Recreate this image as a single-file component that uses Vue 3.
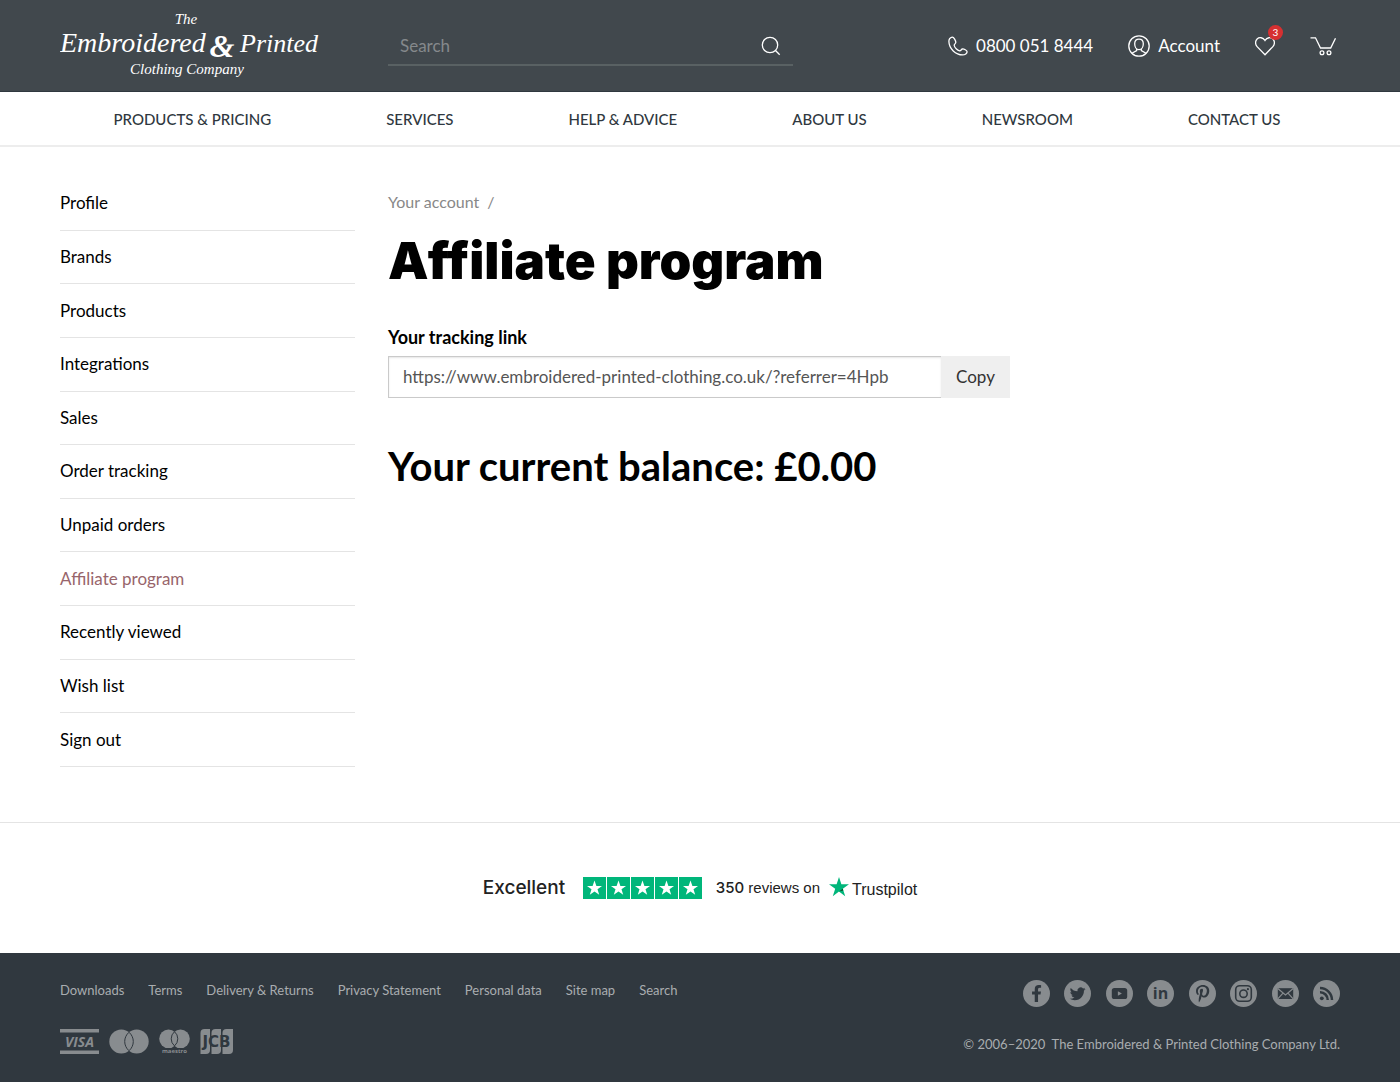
<template>
  <div class="page">
    <header class="header">
      <a
        href="#"
        class="logo"
        aria-label="The Embroidered &amp; Printed Clothing Company"
      >
        <svg
          width="260"
          height="80"
          viewBox="0 0 260 80"
        >
          <text x="126" y="18" font-size="15" text-anchor="middle">The</text>
          <text x="0" y="46" font-size="28">Embroidered</text>
          <text x="162" y="51" font-size="32" text-anchor="middle" class="logo__amp">&amp;</text>
          <text x="258" y="46" font-size="26" text-anchor="end">Printed</text>
          <text x="127" y="68" font-size="15" text-anchor="middle">Clothing Company</text>
        </svg>
      </a>

      <form
        class="search"
        @submit.prevent
      >
        <input
          v-model="query"
          type="search"
          placeholder="Search"
          aria-label="Search"
        >
        <button
          type="submit"
          aria-label="Search"
        >
          <svg width="20" height="20" viewBox="0 0 20 20" class="line">
            <circle cx="9" cy="9" r="7.7" />
            <path d="M14.5 14.5l4.2 4.2" />
          </svg>
        </button>
      </form>

      <div class="tools">
        <a href="#" class="tools__phone">
          <svg width="20" height="20" viewBox="0 0 20 20" class="line">
            <path d="M4.2 1.1C2.2 1.6.8 3.2.9 5.5c.2 7.3 6.8 13.4 13.7 13.4 2.5 0 4.500-1.600 4.500-3.200 0-1.300-3.400-2.900-4.600-2.700-1.300.2-1.600 2-2.900 1.800-2.300-.5-5-3.200-5.400-5.300-.2-1.400 1.500-1.700 1.600-3C7.900 5 5.800.8 4.200 1.100z" />
          </svg>
          0800 051 8444
        </a>
        <a href="#" class="tools__account">
          <svg width="22" height="22" viewBox="0 0 22 22" class="line">
            <circle cx="11" cy="11" r="10.2" />
            <path d="M11 4.2c-2.7 0-4.3 1.9-4.3 4.6 0 3.2 1.7 5.9 4.3 5.9s4.3-2.7 4.3-5.9c0-2.7-1.6-4.6-4.3-4.6z" />
            <path d="M8.7 13.9v1.7l-4.8 2.6M13.3 13.9v1.7l4.8 2.6" />
          </svg>
          Account
        </a>
        <a href="#" class="tools__wish" aria-label="Wish list">
          <svg width="20" height="20" viewBox="1 0 20 20" class="line">
            <path d="M11 18.7L3.1 10.6C1 8.4 1.1 4.9 3.1 3 5.3.9 9 1.3 11 4.5c2-3.2 5.7-3.6 7.9-1.5 2 1.9 2.1 5.4 0 7.6z" />
          </svg>
          <span class="badge">3</span>
        </a>
        <a href="#" class="tools__cart" aria-label="Basket">
          <svg width="26" height="20" viewBox="0 0 26 20" class="line">
            <path d="M.5 1.8h5l5 10.2h10.2l4.8-9.8" />
            <circle cx="12" cy="16.8" r="1.9" />
            <circle cx="19" cy="16.8" r="1.9" />
          </svg>
        </a>
      </div>
    </header>

    <nav class="nav">
      <a
        v-for="item in navItems"
        :key="item"
        href="#"
      >{{ item }}</a>
    </nav>

    <div class="main">
      <ul class="sidebar">
        <li
          v-for="item in accountItems"
          :key="item"
        >
          <a
            href="#"
            :class="{ active: item === 'Affiliate program' }"
          >{{ item }}</a>
        </li>
      </ul>

      <main class="content">
        <div class="breadcrumbs">
          <a href="#">Your account</a>
          <span>/</span>
        </div>
        <h1>Affiliate program</h1>
        <label for="tracking">Your tracking link</label>
        <div class="tracking">
          <input
            id="tracking"
            type="text"
            readonly
            :value="link"
          >
          <button
            type="button"
            @click="copyLink"
          >
            Copy
          </button>
        </div>
        <h2>Your current balance: £0.00</h2>
      </main>
    </div>

    <section class="trust">
      <a href="#">
        <strong>Excellent</strong>
        <span class="trust__stars">
          <svg
            v-for="n in 5"
            :key="n"
            width="23"
            height="22"
            viewBox="0 0 23 22"
          >
            <path fill="#00b67a" d="M0 0h23v22H0z" />
            <path fill="#fff" d="M11.5 3.5l1.9 5.4H19l-4.5 3.4 1.7 5.4-4.7-3.3-4.7 3.3 1.7-5.4L4 8.9h5.6z" />
          </svg>
        </span>
        <span class="trust__reviews"><b>350</b> reviews on</span>
        <span class="trust__brand">
          <svg width="20" height="20" viewBox="0 0 20 20">
            <path fill="#00b67a" d="M10 0l2.4 7.3H20l-6.2 4.5 2.4 7.4-6.2-4.6-6.2 4.6 2.4-7.4L0 7.3h7.6z" />
            <path fill="#005128" d="M14.3 13.4l-.5-1.6-3.8 2.8z" />
          </svg>
          Trustpilot
        </span>
      </a>
    </section>

    <footer class="footer">
      <div class="footer__row">
        <nav class="footer__links">
          <a
            v-for="item in footerItems"
            :key="item"
            href="#"
          >{{ item }}</a>
        </nav>
        <div class="social">
          <a href="#" aria-label="Facebook">
            <svg viewBox="0 0 27 27">
              <circle cx="13.5" cy="13.5" r="13.5" />
              <path class="ink" transform="translate(8.3 5) scale(.033)" d="M279.14 288l14.22-92.66h-88.91v-60.13c0-25.35 12.42-50.06 52.24-50.06h40.42V6.26S260.43 0 225.36 0c-73.22 0-121.08 44.38-121.08 124.72v70.62H22.89V288h81.39v224h100.17V288z" />
            </svg>
          </a>
          <a href="#" aria-label="Twitter">
            <svg viewBox="0 0 27 27">
              <circle cx="13.5" cy="13.5" r="13.5" />
              <path class="ink" transform="translate(5.7 5.9) scale(.66)" d="M23.953 4.57a10 10 0 01-2.825.775 4.958 4.958 0 002.163-2.723c-.951.555-2.005.959-3.127 1.184a4.92 4.92 0 00-8.384 4.482C7.69 8.095 4.067 6.13 1.64 3.162a4.822 4.822 0 00-.666 2.475c0 1.71.87 3.213 2.188 4.096a4.904 4.904 0 01-2.228-.616v.06a4.923 4.923 0 003.946 4.827 4.996 4.996 0 01-2.212.085 4.936 4.936 0 004.604 3.417 9.867 9.867 0 01-6.102 2.105c-.39 0-.779-.023-1.17-.067a13.995 13.995 0 007.557 2.209c9.053 0 13.998-7.496 13.998-13.985 0-.21 0-.42-.015-.63A9.935 9.935 0 0024 4.59z" />
            </svg>
          </a>
          <a href="#" aria-label="YouTube">
            <svg viewBox="0 0 27 27">
              <circle cx="13.5" cy="13.5" r="13.5" />
              <rect class="ink" x="5.8" y="8" width="15.4" height="11" rx="2.6" />
              <path d="M11.9 11.2v4.6l4-2.3z" />
            </svg>
          </a>
          <a href="#" aria-label="LinkedIn">
            <svg viewBox="0 0 27 27">
              <circle cx="13.5" cy="13.5" r="13.5" />
              <text class="ink" x="13.5" y="19" font-size="16" text-anchor="middle">in</text>
            </svg>
          </a>
          <a href="#" aria-label="Pinterest">
            <svg viewBox="0 0 27 27">
              <circle cx="13.5" cy="13.5" r="13.5" />
              <path class="ink" transform="translate(7 4.8) scale(.0345)" d="M204 6.5C101.4 6.5 0 74.9 0 185.6 0 256 39.6 296 63.6 296c9.9 0 15.6-27.6 15.6-35.4 0-9.3-23.7-29.1-23.7-67.8 0-80.4 61.2-137.4 140.4-137.4 68.1 0 118.5 38.7 118.5 109.8 0 53.1-21.3 152.7-90.3 152.7-24.9 0-46.2-18-46.2-43.8 0-37.8 26.4-74.4 26.4-113.4 0-66.2-93.9-54.2-93.9 25.8 0 16.8 2.1 35.4 9.6 50.7-13.8 59.4-42 147.9-42 209.1 0 18.9 2.7 37.5 4.5 56.4 3.4 3.8 1.7 3.4 6.9 1.5 50.4-69 48.6-82.5 71.4-172.8 12.3 23.4 44.1 36 69.3 36 106.2 0 153.9-103.5 153.9-196.8C384 71.3 298.2 6.5 204 6.5z" />
            </svg>
          </a>
          <a href="#" aria-label="Instagram">
            <svg viewBox="0 0 27 27">
              <circle cx="13.5" cy="13.5" r="13.5" />
              <g class="outline">
                <rect x="5.7" y="5.7" width="15.6" height="15.6" rx="4" />
                <circle cx="13.5" cy="13.7" r="3.7" />
              </g>
              <circle class="ink" cx="17.9" cy="9.2" r="1.1" />
            </svg>
          </a>
          <a href="#" aria-label="Email">
            <svg viewBox="0 0 27 27">
              <circle cx="13.5" cy="13.5" r="13.5" />
              <rect class="ink" x="5.8" y="8.2" width="15.4" height="10.8" />
              <path class="fold" d="M5.8 8.5l7.7 6.4 7.7-6.4M5.8 18.8l5.2-5.7M21.2 18.8L16 13.1" />
            </svg>
          </a>
          <a href="#" aria-label="RSS">
            <svg viewBox="0 0 27 27">
              <circle cx="13.5" cy="13.5" r="13.5" />
              <circle class="ink" cx="8.8" cy="18.3" r="1.9" />
              <path class="wave" d="M7 12.3a7.5 7.5 0 017.7 7.7M7 8a12 12 0 0112 12" />
            </svg>
          </a>
        </div>
      </div>

      <div class="footer__row">
        <div class="cards">
          <svg width="39" height="25" viewBox="0 0 39 25">
            <path d="M0 0h39v3.5H0zM0 21.5h39V25H0z" />
            <text x="19.5" y="17.5" font-size="14" font-style="italic" text-anchor="middle">VISA</text>
          </svg>
          <svg width="40" height="25" viewBox="0 0 40 25">
            <circle cx="12.3" cy="12.5" r="12" />
            <circle cx="27.7" cy="12.5" r="12" />
            <path class="lens" d="M20 3.3a12 12 0 010 18.4 12 12 0 010-18.4z" />
          </svg>
          <svg width="31" height="25" viewBox="0 0 31 25">
            <circle cx="9.5" cy="9.8" r="9.3" />
            <circle cx="21.5" cy="9.8" r="9.3" />
            <path class="lens" d="M15.5 2.7a9.3 9.3 0 010 14.2 9.3 9.3 0 010-14.2z" />
            <text x="15.5" y="23.5" font-size="6" text-anchor="middle">maestro</text>
          </svg>
          <svg width="33" height="25" viewBox="0 0 33 25">
            <path d="M4.5 0H10v21a4 4 0 01-4 4H.5V4a4 4 0 014-4z" />
            <path d="M15.5 0H21v21a4 4 0 01-4 4h-5.5V4a4 4 0 014-4z" />
            <path d="M26.5 0H33v21a4 4 0 01-4 4h-6.5V4a4 4 0 014-4z" />
            <text class="ink jcb" x="16.5" y="18" font-size="15" text-anchor="middle">JCB</text>
          </svg>
        </div>
        <p class="copyright">
          © 2006–2020&nbsp; The Embroidered &amp; Printed Clothing Company Ltd.
        </p>
      </div>
    </footer>
  </div>
</template>

<script setup>
import { ref } from 'vue'

const query = ref('')
const link = ref('https://www.embroidered-printed-clothing.co.uk/?referrer=4Hpb')

const navItems = ['Products & pricing', 'Services', 'Help & advice', 'About us', 'Newsroom', 'Contact us']

const accountItems = [
  'Profile',
  'Brands',
  'Products',
  'Integrations',
  'Sales',
  'Order tracking',
  'Unpaid orders',
  'Affiliate program',
  'Recently viewed',
  'Wish list',
  'Sign out'
]

const footerItems = ['Downloads', 'Terms', 'Delivery & Returns', 'Privacy Statement', 'Personal data', 'Site map', 'Search']

const copyLink = () => navigator.clipboard?.writeText(link.value)
</script>

<style>
body {
  margin: 0;
  background: #fff;
}
</style>

<style scoped>
.page {
  font-family: 'Proxima Nova', Lato, sans-serif;
  font-size: 17px;
  line-height: 24px;
  color: #000;
  min-height: 100vh;
  display: flex;
  flex-direction: column;
}
.page * {
  box-sizing: border-box;
}
a {
  color: inherit;
  text-decoration: none;
}
svg {
  display: block;
  flex: none;
}
input,
button {
  font: inherit;
  border: 0;
  border-radius: 0;
  margin: 0;
}
.line {
  fill: none;
  stroke: #fff;
  stroke-width: 1.3;
}

.header {
  display: flex;
  align-items: center;
  height: 92px;
  padding: 0 64px 0 60px;
  background: #41484d;
  border-bottom: 1px solid #30383f;
  color: #fff;
}
.logo {
  width: 328px;
}
.logo text {
  font-family: Satisfy, 'Liberation Serif', cursive;
  font-style: italic;
  fill: #fff;
}
.logo .logo__amp {
  font-weight: 700;
}
.search {
  display: flex;
  align-items: center;
  flex: 0 1 405px;
  height: 40px;
  border-bottom: 2px solid #596163;
}
.search input {
  flex: 1;
  min-width: 0;
  padding: 2px 12px 0;
  background: none;
  color: #fff;
  outline: none;
}
.search input::placeholder {
  color: #85898c;
  opacity: 1;
}
.search button {
  padding: 2px 12px 0;
  background: none;
}
.tools {
  display: flex;
  align-items: center;
  gap: 35px;
  margin-left: auto;
}
.tools a {
  display: flex;
  align-items: center;
  gap: 8px;
  position: relative;
}
.badge {
  position: absolute;
  top: -11px;
  right: -8px;
  width: 15px;
  height: 15px;
  border-radius: 50%;
  background: #d63031;
  font-size: 10px;
  line-height: 15px;
  text-align: center;
}

.nav {
  display: flex;
  justify-content: space-around;
  padding: 15px 62px 14px 56px;
  border-bottom: 2px solid #ededed;
  font-size: 15px;
  font-weight: 500;
  text-transform: uppercase;
  color: #2f3840;
}

.main {
  display: grid;
  grid-template-columns: 295px 1fr;
  gap: 33px;
  padding: 30px 60px 54px;
  flex: 1;
}
.sidebar {
  display: grid;
  grid-auto-rows: 1fr;
  height: 590px;
  margin: 0;
  padding: 0;
  list-style: none;
}
.sidebar li {
  display: flex;
  align-items: center;
  border-bottom: 1px solid #e4e4e4;
}
.sidebar .active {
  color: #98656b;
}
.content {
  padding-top: 13px;
}
.breadcrumbs {
  display: flex;
  gap: 8px;
  font-size: 16px;
  color: #888;
}
h1 {
  margin: 15px 0 32px;
  font-family: 'Proxima Nova', Inter, sans-serif;
  font-size: 51px;
  line-height: 64px;
  font-weight: 900;
}
label {
  display: block;
  margin-bottom: 7px;
  font-size: 18px;
  font-weight: 700;
}
.tracking {
  display: flex;
  max-width: 622px;
  height: 42px;
}
.tracking input {
  flex: 1;
  min-width: 0;
  padding: 0 14px;
  border: 1px solid #cacaca;
  border-right: 0;
  background: #fff;
  box-shadow: inset 0 1px 2px rgba(10, 10, 10, 0.1);
  color: #555;
  outline: none;
}
.tracking button {
  width: 69px;
  padding: 0;
  background: #efefef;
  color: #333;
}
h2 {
  margin: 44px 0 0;
  font-size: 40px;
  line-height: 48px;
  font-weight: 700;
}

.trust {
  display: flex;
  justify-content: center;
  padding: 53px 60px;
  border-top: 1px solid #e4e4e4;
  font-family: 'Liberation Sans', sans-serif;
  color: #222;
}
.trust a {
  display: flex;
  align-items: center;
}
.trust strong {
  width: 100px;
  font-family: Inter, sans-serif;
  font-size: 19px;
  font-weight: 500;
}
.trust__stars {
  display: flex;
  gap: 1px;
  width: 133px;
}
.trust__reviews {
  font-size: 15px;
}
.trust__reviews b {
  font-family: Inter, sans-serif;
  font-weight: 500;
}
.trust__brand {
  display: flex;
  align-items: flex-end;
  gap: 3px;
  margin-left: 9px;
  font-size: 16px;
  line-height: 20px;
}
.trust__brand svg {
  margin-bottom: 3px;
}

.footer {
  display: flex;
  flex-direction: column;
  gap: 22px;
  padding: 27px 60px 28px;
  background: #30383f;
  font-size: 13px;
  line-height: 20px;
  color: #a9adb0;
}
.footer__row {
  display: flex;
  justify-content: space-between;
  align-items: flex-start;
}
.footer__row + .footer__row {
  align-items: flex-end;
}
.footer__links {
  display: flex;
  gap: 24px;
}
.social {
  display: flex;
  justify-content: space-between;
  width: 317px;
}
.social a,
.social svg {
  display: block;
  width: 27px;
  height: 27px;
}
.social svg,
.cards svg {
  fill: #888c8f;
}
.social .ink,
.cards .ink {
  fill: #30383f;
}
.social text,
.cards text {
  font-family: 'Open Sans', sans-serif;
  font-weight: 700;
}
.cards .jcb {
  font-family: 'DejaVu Sans', sans-serif;
}
.social .outline {
  fill: none;
  stroke: #30383f;
  stroke-width: 1.6;
}
.social .fold {
  fill: none;
  stroke: #888c8f;
  stroke-width: 1.2;
}
.social .wave {
  fill: none;
  stroke: #30383f;
  stroke-width: 2.5;
}
.cards {
  display: flex;
  gap: 10px;
}
.cards .lens {
  fill: #888c8f;
  stroke: #30383f;
  stroke-width: 1;
}
.copyright {
  margin: 0;
}
</style>
